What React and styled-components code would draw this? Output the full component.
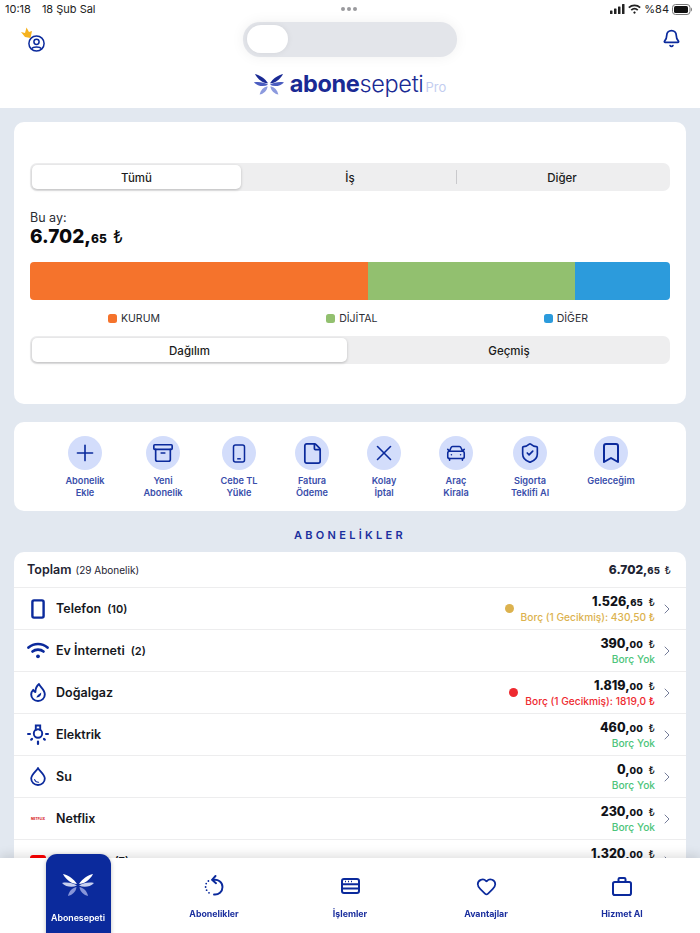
import React from 'react'
import styled, { createGlobalStyle } from 'styled-components'
import { Plus, Archive, File, X, CarFront, ShieldCheck, Bookmark, Bell, ChevronRight, Heart } from 'lucide-react'

const Global = createGlobalStyle`
  * { box-sizing: border-box; }
  html, body { margin: 0; height: 100%; }
  body {
    width: 700px;
    height: 933px;
    overflow: hidden;
    background: #e2e8f0;
    font-family: Inter, "Noto Sans", sans-serif;
    color: #111318;
  }
`
const NAVY = '#0b2a9c'

const Top = styled.header`
  background: #fff;
  height: 108px;
  display: flex;
  flex-direction: column;
`
const StatusBar = styled.div`
  height: 18px;
  padding: 0 7px 0 5px;
  display: grid;
  grid-template-columns: 1fr auto 1fr;
  align-items: center;
  font-size: 11px;
  color: #222;
`
const StatusLeft = styled.div`
  display: flex;
  gap: 11px;
`
const StatusRight = styled.div`
  display: flex;
  align-items: center;
  justify-content: flex-end;
  gap: 3px;
`
const Dots = styled.div`
  display: flex;
  gap: 2px;
`
const Dot3 = styled.i`
  width: 4px;
  height: 4px;
  border-radius: 50%;
  background: #9a9a9e;
`
const HeaderRow = styled.div`
  height: 46px;
  padding: 4px 19px 0;
  display: grid;
  grid-template-columns: 1fr auto 1fr;
  align-items: start;
`
const Toggle = styled.div`
  width: 214px;
  height: 35px;
  border-radius: 17px;
  background: #e3e5ea;
  padding: 3px 4px;
  box-shadow: 0 0 14px rgba(0, 0, 0, 0.06);
`
const Thumb = styled.div`
  width: 41px;
  height: 28px;
  border-radius: 14px;
  background: #fff;
  box-shadow: 0 0 6px rgba(0, 0, 0, 0.07);
`
const ProfileBtn = styled.div`
  position: relative;
  width: 17px;
  margin-left: 9px;
  padding-top: 13px;
`
const Crown = styled.svg`
  position: absolute;
  left: -8px;
  top: 5px;
`
const BellWrap = styled.div`
  padding-top: 7px;
  justify-self: end;
  color: ${NAVY};
`
const Logo = styled.div`
  display: flex;
  justify-content: center;
  align-items: center;
  gap: 6px;
  margin-top: 5px;
  height: 30px;
`
const LogoText = styled.div`
  font-family: Inter, sans-serif;
  font-size: 23.5px;
  line-height: 1;
  letter-spacing: -0.35px;
  color: #1a2a94;
  font-weight: 300;
  & b { font-weight: 700; }
`
const Pro = styled.span`
  font-size: 13px;
  font-weight: 400;
  letter-spacing: 0;
  color: #c3cdf0;
  margin-left: 2px;
`
const Main = styled.main`
  padding: 14px 14px 0;
  display: flex;
  flex-direction: column;
`
const Card = styled.section`
  background: #fff;
  border-radius: 10px;
`
const SummaryCard = styled(Card)`
  height: 282px;
  padding: 41px 16px 0;
  display: flex;
  flex-direction: column;
`
const Segment = styled.div`
  height: 28px;
  border-radius: 7px;
  background: #eeeeef;
  padding: 2px;
  display: grid;
  grid-template-columns: repeat(${p => p.$cols}, 1fr);
  align-items: stretch;
`
const SegItem = styled.div`
  display: flex;
  align-items: center;
  justify-content: center;
  padding-top: 1px;
  font-size: 11.5px;
  font-weight: 500;
  border-radius: 5px;
  color: #1b1c20;
  position: relative;
  background: ${p => (p.$active ? '#fff' : 'transparent')};
  box-shadow: ${p => (p.$active ? '0 1px 3px rgba(0,0,0,.22)' : 'none')};
  margin-right: ${p => (p.$active ? '3px' : '0')};
  ${p => p.$divider && `
    &::before {
      content: '';
      position: absolute;
      left: 0;
      top: 5px;
      bottom: 5px;
      width: 1px;
      background: #c9c9cc;
    }
  `}
`
const ThisMonth = styled.div`
  margin-top: 19px;
  font-size: 12.5px;
  line-height: 15px;
  color: #2a2c33;
`
const BigAmount = styled.div`
  margin-top: 1px;
  font-size: 19px;
  line-height: 22px;
  font-weight: 800;
  color: #0a0a0d;
  & small { font-size: 12px; font-weight: 800; }
  & em { font-style: normal; font-weight: 400; font-size: 17px; margin-left: 2px; }
`
const Bar = styled.div`
  margin-top: 12px;
  height: 38px;
  border-radius: 4px;
  overflow: hidden;
  display: flex;
`
const BarPart = styled.div`
  background: ${p => p.$color};
`
const Legend = styled.div`
  height: 36px;
  padding: 0 82px 0 78px;
  display: flex;
  justify-content: space-between;
  align-items: center;
`
const LegendItem = styled.div`
  display: flex;
  align-items: center;
  gap: 4px;
  font-size: 10.5px;
  color: #2a2c33;
  & i {
    width: 9px;
    height: 9px;
    border-radius: 2.5px;
    background: ${p => p.$color};
  }
`
const ActionsCard = styled(Card)`
  margin-top: 18px;
  height: 89px;
  padding-top: 14px;
  display: flex;
  justify-content: center;
  gap: 38px;
`
const Action = styled.div`
  min-width: 34px;
  display: flex;
  flex-direction: column;
  align-items: center;
`
const ActionCircle = styled.div`
  width: 34px;
  height: 34px;
  border-radius: 50%;
  background: #d3ddfb;
  color: ${NAVY};
  display: flex;
  align-items: center;
  justify-content: center;
`
const ActionLabel = styled.div`
  margin-top: 5px;
  font-size: 9.2px;
  line-height: 12px;
  font-weight: 600;
  text-align: center;
  white-space: pre;
  color: #3a4eab;
`
const SectionTitle = styled.h2`
  margin: 0;
  height: 41px;
  padding-top: 6px;
  display: flex;
  align-items: center;
  justify-content: center;
  font-size: 11px;
  font-weight: 600;
  letter-spacing: 3.3px;
  color: #1b2f9e;
`
const ListCard = styled(Card)`
  border-radius: 10px 10px 0 0;
`
const TotalRow = styled.div`
  height: 36px;
  padding: 0 15px 0 13px;
  display: flex;
  align-items: center;
  justify-content: space-between;
  border-bottom: 1px solid #ededee;
`
const TotalLabel = styled.div`
  font-size: 12.5px;
  font-weight: 600;
  color: #1e2433;
  & span { font-size: 10px; font-weight: 400; margin-left: 1px; }
`
const TotalAmount = styled.div`
  font-size: 12px;
  font-weight: 800;
  color: #1e2433;
  & small { font-size: 9.5px; font-style: normal; }
  & em { font-style: normal; font-weight: 400; font-size: 11px; margin-left: 2px; }
`
const Row = styled.div`
  height: 42px;
  padding: 0 12px;
  display: flex;
  align-items: center;
  border-bottom: 1px solid #ededee;
`
const RowIcon = styled.div`
  width: 24px;
  height: 24px;
  margin-right: 6px;
  display: flex;
  align-items: center;
  justify-content: center;
  color: ${NAVY};
`
const RowName = styled.div`
  font-size: 12.5px;
  font-weight: 600;
  color: #15171c;
  & span { font-size: 11px; margin-left: 6px; }
`
const RowRight = styled.div`
  margin-left: auto;
  display: flex;
  align-items: center;
  gap: 7px;
`
const StatusDot = styled.i`
  width: 9px;
  height: 9px;
  border-radius: 50%;
  background: ${p => p.$color};
`
const Amounts = styled.div`
  padding-top: 1px;
  text-align: right;
`
const Amount = styled.div`
  font-size: 12.5px;
  line-height: 15px;
  font-weight: 800;
  color: #111318;
  & small { font-size: 9.5px; }
  & em { font-style: normal; font-weight: 400; font-size: 11px; margin-left: 3px; }
`
const Debt = styled.div`
  font-size: 10.2px;
  line-height: 14px;
  font-weight: 500;
  color: ${p => p.$color};
`
const Chevron = styled.div`
  width: 16px;
  margin-left: 4px;
  margin-right: -1px;
  color: #6b7391;
  display: flex;
  justify-content: center;
`
const TabBar = styled.nav`
  position: fixed;
  left: 0;
  right: 0;
  bottom: 0;
  height: 75px;
  padding: 0 10px;
  background: #fff;
  box-shadow: 0 -3px 10px rgba(0, 0, 0, 0.12);
  display: grid;
  grid-template-columns: repeat(5, 136px);
`
const Tab = styled.div`
  display: flex;
  flex-direction: column;
  align-items: center;
  color: ${NAVY};
  padding-top: 16px;
  font-size: 8.8px;
  font-weight: 700;
`
const TabIcon = styled.div`
  height: 24px;
  display: flex;
  align-items: center;
  justify-content: center;
`
const TabLabel = styled.div`
  margin-top: 10px;
  line-height: 12px;
  color: #1b2f9e;
`
const ActiveTab = styled.div`
  justify-self: center;
  width: 65px;
  height: 90px;
  margin-top: -4px;
  border-radius: 11px;
  background: #0b2a9c;
  color: #fff;
  display: flex;
  flex-direction: column;
  align-items: center;
  padding-top: 19px;
  font-size: 8.8px;
  font-weight: 600;
  box-shadow: 0 1px 4px rgba(0, 0, 0, 0.25);
`
const ActiveLabel = styled.div`
  margin-top: 15px;
  line-height: 12px;
`

function Wings({ w = 32, a, b, c }) {
  return (
    <svg width={w} height={w * 0.75} viewBox="0 0 32 24">
      <path d="M1 1 C6 2 12 6 15 11 C10 11 4 7 1 1Z" fill={a} />
      <path d="M31 1 C26 2 20 6 17 11 C22 11 28 7 31 1Z" fill={a} />
      <path d="M0 10 C5 9 11 10 15 12.5 C10 15 4 14 0 10Z" fill={b} />
      <path d="M32 10 C27 9 21 10 17 12.5 C22 15 28 14 32 10Z" fill={b} />
      <path d="M14.5 14 C10 15 7 18 6 23 C10 22 14 19 14.5 14Z" fill={c} />
      <path d="M17.5 14 C22 15 25 18 26 23 C22 22 18 19 17.5 14Z" fill={c} />
    </svg>
  )
}

const Signal = () => (
  <svg width="15" height="10" viewBox="0 0 15 10" fill="#222">
    <rect x="0" y="6.5" width="2.5" height="3.5" rx=".5" />
    <rect x="4" y="4.5" width="2.5" height="5.5" rx=".5" />
    <rect x="8" y="2.5" width="2.5" height="7.5" rx=".5" />
    <rect x="12" y="0" width="2.5" height="10" rx=".5" />
  </svg>
)
const WifiSmall = () => (
  <svg width="13" height="10" viewBox="0 0 24 18" fill="none" stroke="#222" strokeWidth="3.4">
    <path d="M1.5 6.5 C7.5 1 16.5 1 22.5 6.5" />
    <path d="M6 11 C9.5 7.8 14.5 7.8 18 11" />
    <circle cx="12" cy="15.5" r="1.6" fill="#222" strokeWidth="1" />
  </svg>
)
const Battery = () => (
  <svg width="21" height="11" viewBox="0 0 21 11">
    <rect x=".5" y=".5" width="17.5" height="10" rx="3" fill="none" stroke="#777" />
    <rect x="2" y="2" width="14" height="7" rx="1.6" fill="#111" />
    <path d="M19 3.5 C20.3 4 20.3 7 19 7.5Z" fill="#777" />
  </svg>
)
const Profile = () => (
  <svg width="17" height="17" viewBox="0 0 17 17" fill="none" stroke={NAVY} strokeWidth="1.5" style={{ display: 'block' }}>
    <circle cx="8.5" cy="8.5" r="7.6" />
    <circle cx="8.5" cy="6.8" r="2.6" />
    <path d="M3.8 13.6 C5 11.4 12 11.4 13.2 13.6" />
  </svg>
)
const Lira = () => <em>₺</em>

const PhoneOutline = () => (
  <svg width="14" height="20" viewBox="0 0 14 20" fill="none" stroke={NAVY} strokeWidth="2.4">
    <rect x="1.4" y="1.4" width="11.2" height="17.2" rx="1.6" />
  </svg>
)
const PhoneAction = () => (
  <svg width="14" height="19" viewBox="0 0 14 19" fill="none" stroke={NAVY} strokeWidth="1.5">
    <rect x="1.5" y="1" width="11" height="17" rx="2" />
    <path d="M5.2 14.8 H8.8" />
  </svg>
)
const WifiIcon = () => (
  <svg width="22" height="17" viewBox="0 0 22 17" fill="none" stroke={NAVY} strokeWidth="2.7" strokeLinecap="round">
    <path d="M1.5 5.5 C7 0.8 15 0.8 20.5 5.5" />
    <path d="M5.5 9.5 C8.5 7 13.5 7 16.5 9.5" />
    <circle cx="11" cy="14.3" r="1.9" fill={NAVY} stroke="none" />
  </svg>
)
const GasIcon = () => (
  <svg width="16" height="19" viewBox="0 0 16 19" fill="none" stroke={NAVY} strokeWidth="1.9" strokeLinejoin="round">
    <path d="M9 1 C10 4 14.8 6.5 14.8 11.5 C14.8 15.3 11.8 18 8 18 C4.2 18 1.2 15.3 1.2 11.5 C1.2 9.5 2 8 3.2 6.8 C3.8 8 4.4 8.6 5.4 9 C5.4 6 6.6 3 9 1Z" />
    <path d="M11.2 9.5 C11.4 12.5 9.8 14.6 6.4 14.4 C7 12 9 11.6 11.2 9.5Z" fill={NAVY} stroke="none" />
  </svg>
)
const BulbIcon = () => (
  <svg width="22" height="22" viewBox="0 0 22 22" fill="none" stroke={NAVY} strokeWidth="1.9" strokeLinecap="round">
    <circle cx="11" cy="9.5" r="4.2" />
    <path d="M8.8 6 V1.5 H13.2 V6" />
    <path d="M1 10 H3 M19 10 H21" strokeWidth="2" />
    <path d="M4.2 15.6 L5 15 M17.8 15.6 L17 15 M11 17.5 V20" strokeWidth="2.2" />
  </svg>
)
const WaterIcon = () => (
  <svg width="16" height="19" viewBox="0 0 16 19" fill="none" stroke={NAVY} strokeWidth="1.8" strokeLinecap="round">
    <path d="M8 1.2 C9.5 4 14.8 7.5 14.8 11.6 C14.8 15.3 11.8 18 8 18 C4.2 18 1.2 15.3 1.2 11.6 C1.2 7.5 6.5 4 8 1.2Z" />
    <path d="M4.6 12.6 C5.2 14.4 6.6 15.2 8.6 15.2" strokeWidth="1.1" />
  </svg>
)
const NetflixMark = styled.span`
  font-size: 3.3px;
  font-weight: 800;
  color: #d8232a;
`
const RedMark = styled.div`
  width: 16px;
  height: 12px;
  border-radius: 3px;
  background: #f00;
`
const ReloadIcon = () => (
  <svg width="20" height="22" viewBox="0 0 20 22" fill="none" stroke={NAVY} strokeWidth="1.9" strokeLinecap="round" strokeLinejoin="round">
    <path d="M9 5 C14 3.8 18.5 7 18.5 12 C18.5 16.8 14.6 20 10 19.5" />
    <path d="M11.5 1 L8 4.8 L12 8.2" />
    <path d="M1.6 12 h.01 M2.2 8.6 h.01 M4.4 6 h.01 M2.6 15.2 h.01 M5 17.8 h.01" strokeWidth="1.8" />
  </svg>
)
const WindowIcon = () => (
  <svg width="19" height="16" viewBox="0 0 19 16" fill="none" stroke={NAVY} strokeWidth="2">
    <rect x="1" y="1" width="17" height="14" rx="2" />
    <path d="M1 6.2 H18 M1 10.4 H18" />
    <path d="M4 3.6 h1 M7 3.6 h1 M10 3.6 h1" strokeWidth="1.5" />
  </svg>
)
const CaseIcon = () => (
  <svg width="20" height="19" viewBox="0 0 20 19" fill="none" stroke={NAVY} strokeWidth="2" strokeLinejoin="round">
    <rect x="1" y="5" width="18" height="13" rx="1.8" />
    <path d="M6.5 5 V2.2 C6.5 1.5 7 1 7.7 1 H12.3 C13 1 13.5 1.5 13.5 2.2 V5" />
  </svg>
)

const actions = [
  { label: 'Abonelik\nEkle', icon: <Plus size={26} strokeWidth={1.5} />, w: 40 },
  { label: 'Yeni\nAbonelik', icon: <Archive size={22} strokeWidth={1.8} />, w: 40 },
  { label: 'Cebe TL\nYükle', icon: <PhoneAction />, w: 36 },
  { label: 'Fatura\nÖdeme', icon: <File size={23} strokeWidth={1.8} />, w: 34 },
  { label: 'Kolay\nİptal', icon: <X size={26} strokeWidth={1.5} />, w: 34 },
  { label: 'Araç\nKirala', icon: <CarFront size={22} strokeWidth={1.7} />, w: 34 },
  { label: 'Sigorta\nTeklifi Al', icon: <ShieldCheck size={22} strokeWidth={1.8} />, w: 38 },
  { label: 'Geleceğim', icon: <Bookmark size={24} strokeWidth={2} />, w: 48 },
]

const rows = [
  { name: 'Telefon', count: 10, icon: <PhoneOutline />, tl: '1.526', kr: '65', debt: 'Borç (1 Gecikmiş): 430,50 ₺', color: '#dcb24e' },
  { name: 'Ev İnterneti', count: 2, icon: <WifiIcon />, tl: '390', kr: '00' },
  { name: 'Doğalgaz', icon: <GasIcon />, tl: '1.819', kr: '00', debt: 'Borç (1 Gecikmiş): 1819,0 ₺', color: '#ee2a30' },
  { name: 'Elektrik', icon: <BulbIcon />, tl: '460', kr: '00' },
  { name: 'Su', icon: <WaterIcon />, tl: '0', kr: '00' },
  { name: 'Netflix', icon: <NetflixMark>NETFLIX</NetflixMark>, tl: '230', kr: '00' },
  { name: 'YouTube', count: 7, icon: <RedMark />, tl: '1.320', kr: '00' },
]

export default function App() {
  return (
    <>
      <Global />
      <Top>
        <StatusBar>
          <StatusLeft><span>10:18</span><span>18 Şub Sal</span></StatusLeft>
          <Dots><Dot3 /><Dot3 /><Dot3 /></Dots>
          <StatusRight><Signal /><WifiSmall /><span>%84</span><Battery /></StatusRight>
        </StatusBar>
        <HeaderRow>
          <ProfileBtn>
            <Crown width="13" height="12" viewBox="0 0 13 12">
              <path d="M1 5 L5 6 L6.5 0.5 L9 5 L12 4 L10.5 11 L5 10Z" fill="#f5b21f" />
            </Crown>
            <Profile />
          </ProfileBtn>
          <Toggle><Thumb /></Toggle>
          <BellWrap><Bell size={19} strokeWidth={2.2} /></BellWrap>
        </HeaderRow>
        <Logo>
          <Wings w={30} a="#1a2a94" b="#4a5cc0" c="#8c9ade" />
          <LogoText><b>abone</b>sepeti<Pro>Pro</Pro></LogoText>
        </Logo>
      </Top>
      <Main>
        <SummaryCard>
          <Segment $cols={3}>
            <SegItem $active>Tümü</SegItem>
            <SegItem>İş</SegItem>
            <SegItem $divider>Diğer</SegItem>
          </Segment>
          <ThisMonth>Bu ay:</ThisMonth>
          <BigAmount>6.702,<small>65</small> <Lira /></BigAmount>
          <Bar>
            <BarPart $color="#f5732c" style={{ width: 338 }} />
            <BarPart $color="#92c06f" style={{ width: 207 }} />
            <BarPart $color="#2c9bdc" style={{ width: 95 }} />
          </Bar>
          <Legend>
            <LegendItem $color="#f5732c"><i />KURUM</LegendItem>
            <LegendItem $color="#92c06f"><i />DİJİTAL</LegendItem>
            <LegendItem $color="#2c9bdc"><i />DİĞER</LegendItem>
          </Legend>
          <Segment $cols={2}>
            <SegItem $active>Dağılım</SegItem>
            <SegItem>Geçmiş</SegItem>
          </Segment>
        </SummaryCard>
        <ActionsCard>
          {actions.map(a => (
            <Action key={a.label} style={{ width: a.w }}>
              <ActionCircle>{a.icon}</ActionCircle>
              <ActionLabel>{a.label}</ActionLabel>
            </Action>
          ))}
        </ActionsCard>
        <SectionTitle>ABONELİKLER</SectionTitle>
        <ListCard>
          <TotalRow>
            <TotalLabel>Toplam <span>(29 Abonelik)</span></TotalLabel>
            <TotalAmount>6.702,<small>65</small> <Lira /></TotalAmount>
          </TotalRow>
          {rows.map(r => (
            <Row key={r.name}>
              <RowIcon>{r.icon}</RowIcon>
              <RowName>{r.name}{r.count ? <span>({r.count})</span> : null}</RowName>
              <RowRight>
                {r.debt && <StatusDot $color={r.color} />}
                <Amounts>
                  <Amount>{r.tl},<small>{r.kr}</small> <Lira /></Amount>
                  <Debt $color={r.color || '#4cc47a'}>{r.debt || 'Borç Yok'}</Debt>
                </Amounts>
              </RowRight>
              <Chevron><ChevronRight size={20} strokeWidth={1.4} /></Chevron>
            </Row>
          ))}
        </ListCard>
      </Main>
      <TabBar>
        <ActiveTab>
          <Wings w={32} a="#ffffff" b="#c6cfef" c="#8795d8" />
          <ActiveLabel>Abonesepeti</ActiveLabel>
        </ActiveTab>
        <Tab><TabIcon><ReloadIcon /></TabIcon><TabLabel>Abonelikler</TabLabel></Tab>
        <Tab><TabIcon><WindowIcon /></TabIcon><TabLabel>İşlemler</TabLabel></Tab>
        <Tab><TabIcon><Heart size={21} strokeWidth={2} /></TabIcon><TabLabel>Avantajlar</TabLabel></Tab>
        <Tab><TabIcon><CaseIcon /></TabIcon><TabLabel>Hizmet Al</TabLabel></Tab>
      </TabBar>
    </>
  )
}
